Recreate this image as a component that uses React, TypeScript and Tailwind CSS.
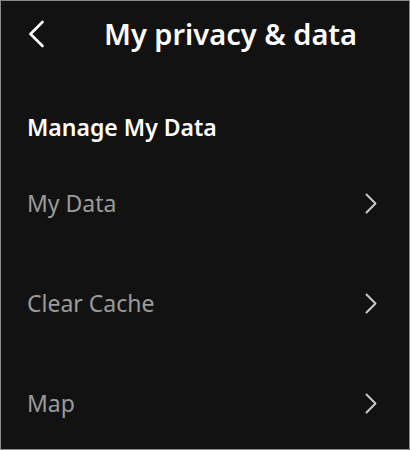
import React from "react";

const rows = ["My Data", "Clear Cache", "Map"];

const Chevron = ({ dir, className }: { dir: "left" | "right"; className?: string }) => (
  <svg viewBox="0 0 16 28" className={className} fill="none" stroke="currentColor" strokeWidth={2.6} strokeLinecap="round" strokeLinejoin="round">
    {dir === "left" ? <path d="M14 2 L2 14 L14 26" /> : <path d="M2 2 L14 14 L2 26" />}
  </svg>
);

const App = () => {
  return (
    <div className="w-[410px] h-[450px] overflow-hidden border border-[#8a8a8a] bg-[#121212] font-['Noto_Sans',sans-serif]">
      <div className="flex items-center h-[66px]">
        <Chevron dir="left" className="w-[17px] h-[28px] ml-[27px] text-white" />
        <h1 className="ml-[59px] text-[29px] leading-[36px] font-semibold text-white">My privacy &amp; data</h1>
      </div>

      <h2 className="mt-[46px] pl-[26px] text-[23px] leading-[28px] font-semibold text-white">Manage My Data</h2>

      <ul className="mt-[12px]">
        {rows.map((row) => (
          <li key={row} className="flex items-center justify-between h-[100px] pl-[26px] pr-[32px]">
            <span className="text-[23px] leading-[28px] text-[#9b9b9b]">{row}</span>
            <Chevron dir="right" className="w-[12px] h-[21px] text-[#c9c9c9]" />
          </li>
        ))}
      </ul>
    </div>
  );
};

export default App;
